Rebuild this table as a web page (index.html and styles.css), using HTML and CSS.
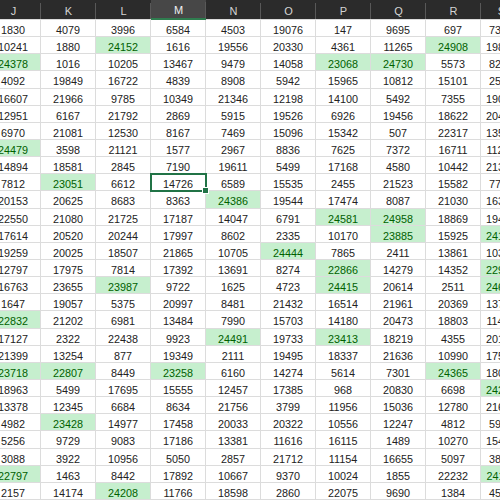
FILE: index.html
```
<!DOCTYPE html>
<html>
<head>
<meta charset="utf-8">
<link rel="stylesheet" href="styles.css">
</head>
<body>
<div class="sheet">
<div class="grid">
<span class="h">J</span><span class="h">K</span><span class="h">L</span><span class="h active">M</span><span class="h">N</span><span class="h">O</span><span class="h">P</span><span class="h">Q</span><span class="h">R</span><span class="h">S</span>
<span>1830</span><span>4079</span><span>3996</span><span>6584</span><span>4503</span><span>19076</span><span>147</span><span>9695</span><span>697</span><span>7340</span>
<span>10241</span><span>1880</span><span class="g">24152</span><span>1616</span><span>19556</span><span>20330</span><span>4361</span><span>11265</span><span class="g">24908</span><span>19823</span>
<span class="g">24378</span><span>1016</span><span>10205</span><span>13467</span><span>9479</span><span>14058</span><span class="g">23068</span><span class="g">24730</span><span>5573</span><span>8214</span>
<span>4092</span><span>19849</span><span>16722</span><span>4839</span><span>8908</span><span>5942</span><span>15965</span><span>10812</span><span>15101</span><span>2591</span>
<span>16607</span><span>21966</span><span>9785</span><span>10349</span><span>21346</span><span>12198</span><span>14100</span><span>5492</span><span>7355</span><span>19024</span>
<span>12951</span><span>6167</span><span>21792</span><span>2869</span><span>5915</span><span>19526</span><span>6926</span><span>19456</span><span>18622</span><span>20417</span>
<span>6970</span><span>21081</span><span>12530</span><span>8167</span><span>7469</span><span>15096</span><span>15342</span><span>507</span><span>22317</span><span>13580</span>
<span class="g">24479</span><span>3598</span><span>21121</span><span>1577</span><span>2967</span><span>8836</span><span>7625</span><span>7372</span><span>16711</span><span>11246</span>
<span>14894</span><span>18581</span><span>2845</span><span>7190</span><span>19611</span><span>5499</span><span>17168</span><span>4580</span><span>10442</span><span>21307</span>
<span>7812</span><span class="g">23051</span><span>6612</span><span class="sel">14726</span><span>6589</span><span>15535</span><span>2455</span><span>21523</span><span>15582</span><span>7718</span>
<span>20153</span><span>20625</span><span>8683</span><span>8363</span><span class="g">24386</span><span>19544</span><span>17474</span><span>8087</span><span>21030</span><span>16352</span>
<span>22550</span><span>21080</span><span>21725</span><span>17187</span><span>14047</span><span>6791</span><span class="g">24581</span><span class="g">24958</span><span>18869</span><span>19470</span>
<span>17614</span><span>20520</span><span>20244</span><span>17997</span><span>8602</span><span>2335</span><span>10170</span><span class="g">23885</span><span>15925</span><span class="g">24103</span>
<span>19259</span><span>20025</span><span>18507</span><span>21865</span><span>10705</span><span class="g">24444</span><span>7865</span><span>2411</span><span>13861</span><span>10385</span>
<span>12797</span><span>17975</span><span>7814</span><span>17392</span><span>13691</span><span>8274</span><span class="g">22866</span><span>14279</span><span>14352</span><span class="g">22951</span>
<span>16763</span><span>23655</span><span class="g">23987</span><span>9722</span><span>1625</span><span>4723</span><span class="g">24415</span><span>20614</span><span>2511</span><span class="g">24670</span>
<span>1647</span><span>19057</span><span>5375</span><span>20997</span><span>8481</span><span>21432</span><span>16514</span><span>21961</span><span>20369</span><span>13795</span>
<span class="g">22832</span><span>21202</span><span>6981</span><span>13484</span><span>7990</span><span>15703</span><span>14180</span><span>20473</span><span>18803</span><span>11428</span>
<span>17127</span><span>2322</span><span>22438</span><span>9923</span><span class="g">24491</span><span>19733</span><span class="g">23413</span><span>18219</span><span>4355</span><span>20166</span>
<span>21399</span><span>13254</span><span>877</span><span>19349</span><span>2111</span><span>19495</span><span>18337</span><span>21636</span><span>10990</span><span>17531</span>
<span class="g">23718</span><span class="g">22807</span><span>8449</span><span class="g">23258</span><span>6160</span><span>14274</span><span>5614</span><span>7301</span><span class="g">24365</span><span>18092</span>
<span>18963</span><span>5499</span><span>17695</span><span>15555</span><span>12457</span><span>17385</span><span>968</span><span>20830</span><span>6698</span><span class="g">24237</span>
<span>13378</span><span>12345</span><span>6684</span><span>8634</span><span>21756</span><span>3799</span><span>11956</span><span>15036</span><span>12780</span><span>21604</span>
<span>4982</span><span class="g">23428</span><span>14977</span><span>17458</span><span>20033</span><span>20322</span><span>10556</span><span>12247</span><span>4812</span><span>5936</span>
<span>5256</span><span>9729</span><span>9083</span><span>17186</span><span>13381</span><span>11616</span><span>16115</span><span>1489</span><span>10270</span><span>15482</span>
<span>3088</span><span>3922</span><span>10956</span><span>5050</span><span>2857</span><span>21712</span><span>11154</span><span>16655</span><span>5097</span><span>3861</span>
<span class="g">22797</span><span>1463</span><span>8442</span><span>17892</span><span>10667</span><span>9370</span><span>10024</span><span>1855</span><span>22232</span><span class="g">24119</span>
<span>2157</span><span>14174</span><span class="g">24208</span><span>11766</span><span>18598</span><span>2860</span><span>22075</span><span>9690</span><span>1384</span><span>4527</span>
</div>
</div>
</body>
</html>
```
FILE: styles.css
```
html, body {
  margin: 0;
  padding: 0;
  background: #ffffff;
}

.sheet {
  width: 500px;
  height: 500px;
  overflow: hidden;
  background: #ffffff;
}

.grid {
  display: grid;
  grid-template-columns: repeat(9, 55px) 41px;
  grid-template-rows: 20px;
  grid-auto-rows: 17.15px;
  margin-left: -14px;
  width: 536px;
  font-family: "Liberation Sans", Arial, sans-serif;
  font-size: 10.8px;
  color: #222222;
}

.grid > span {
  box-sizing: border-box;
  border-right: 1px solid #dcdcdc;
  border-bottom: 1px solid #dcdcdc;
  text-align: center;
  line-height: 14px;
  padding-top: 3px;
  white-space: nowrap;
  overflow: hidden;
}

.grid > span.h {
  background-color: #2b2b2b;
  background-image: linear-gradient(#585858, #585858);
  background-size: 1px 16px;
  background-position: right bottom;
  background-repeat: no-repeat;
  border-right: 0;
  border-bottom: 1px solid #dcdcdc;
  color: #d4d4d4;
  font-size: 11px;
  line-height: 16px;
  padding-top: 3px;
}

.grid > span.h.active {
  background-color: #474747;
  border-bottom: 2px solid #2f7d4f;
  color: #f0f0f0;
  line-height: 15px;
}

.grid > span.g {
  background: #c6efce;
  color: #006100;
}

.grid > span.sel {
  position: relative;
  overflow: visible;
  outline: 2px solid #217346;
  outline-offset: -1px;
  z-index: 1;
}

.grid > span.sel::after {
  content: "";
  position: absolute;
  right: -4px;
  bottom: -4px;
  width: 5px;
  height: 5px;
  background: #217346;
  border: 1px solid #ffffff;
}
```
